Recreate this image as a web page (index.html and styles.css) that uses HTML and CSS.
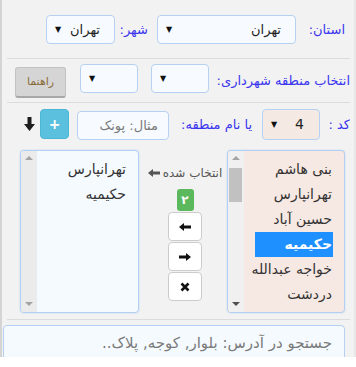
FILE: index.html
```html
<!DOCTYPE html>
<html lang="fa" dir="rtl">
<head>
    <meta charset="UTF-8">
    <title>انتخاب منطقه</title>
    <link rel="stylesheet" href="styles.css">
</head>
<body>

<div class="panel">
    <div class="row row-city">
        <label class="lbl lbl-ostan">استان:</label>
        <div class="sel sel-ostan"><span>تهران</span><span class="caret">▼</span></div>
        <label class="lbl lbl-shahr">شهر:</label>
        <div class="sel sel-shahr"><span>تهران</span><span class="caret">▼</span></div>
    </div>
    <div class="sep"></div>

    <div class="row row-zone">
        <label class="lbl lbl-zone">انتخاب منطقه شهرداری:</label>
        <div class="sel sel-small"><span></span><span class="caret">▼</span></div>
        <div class="sel sel-small sel-second"><span></span><span class="caret">▼</span></div>
        <button class="help-btn">راهنما</button>
    </div>
    <div class="sep"></div>

    <div class="row row-code">
        <label class="lbl lbl-code">کد :</label>
        <div class="sel sel-code"><span>4</span><span class="caret">▼</span></div>
        <label class="lbl lbl-name">یا نام منطقه:</label>
        <input class="name-input" type="text" placeholder="مثال: پونک">
        <button class="add-btn">+</button>
        <span class="down-icon">
            <svg width="11" height="14" viewBox="0 0 11 14"><path d="M3.5 0h4v7h3.5L5.5 14 0 7h3.5z" fill="#1e1e1e"/></svg>
        </span>
    </div>

    <div class="lists">
        <div class="listbox list-all">
            <div class="scroll">
                <span class="tri up"></span>
                <span class="thumb"></span>
                <span class="tri down dark"></span>
            </div>
            <div class="options">
                <div class="opt">بنی هاشم</div>
                <div class="opt">تهرانپارس</div>
                <div class="opt">حسین آباد</div>
                <div class="opt picked">حکیمیه</div>
                <div class="opt">خواجه عبدالله</div>
                <div class="opt">دردشت</div>
                <div class="opt">سراج</div>
            </div>
        </div>

        <div class="middle">
            <div class="chosen-label">
                <span>انتخاب شده</span>
                <svg width="12" height="8" viewBox="0 0 12 8"><path d="M0 4L5 0v2.5h7v3H5V8z" fill="#555"/></svg>
            </div>
            <span class="badge">۲</span>
            <button class="move-btn">
                <svg width="12" height="8" viewBox="0 0 12 8"><path d="M0 4L5 0v2.5h7v3H5V8z" fill="#111"/></svg>
            </button>
            <button class="move-btn">
                <svg width="12" height="8" viewBox="0 0 12 8"><path d="M12 4L7 0v2.5H0v3h7V8z" fill="#111"/></svg>
            </button>
            <button class="move-btn">
                <svg width="10" height="10" viewBox="0 0 10 10"><path d="M1.5 1.5l7 7M8.5 1.5l-7 7" stroke="#111" stroke-width="2.6"/></svg>
            </button>
        </div>

        <div class="listbox list-chosen">
            <div class="scroll">
                <span class="tri up"></span>
                <span class="tri down"></span>
            </div>
            <div class="options">
                <div class="opt">تهرانپارس</div>
                <div class="opt">حکیمیه</div>
            </div>
        </div>
    </div>
    <div class="sep sep-low"></div>

    <input class="search-input" type="text" placeholder="جستجو در آدرس: بلوار, کوجه, پلاک..">
</div>

</body>
</html>
```

FILE: styles.css
```css
body {
    margin: 0;
    background-color: #fff;
    font-family: "DejaVu Sans", sans-serif;
}
.panel {
    direction: rtl;
    height: 357px;
    width: 352px;
    background-color: #f2f2f2;
    border-left: 2px solid #d4d4d4;
    border-right: 2px solid #e8e8e8;
    overflow: hidden;
}
.row {
    display: flex;
    align-items: center;
}
.row-city {
    height: 58px;
    padding-right: 9px;
}
.row-zone {
    height: 43px;
    padding-right: 4px;
}
.row-code {
    height: 42px;
    padding-right: 4px;
}
.sep {
    height: 1px;
    background-color: #dcdcdc;
    margin: 0 4px 0 5px;
}
.lbl {
    color: #3a35ee;
    font-size: 13px;
    white-space: nowrap;
    box-sizing: border-box;
    overflow: hidden;
}
.lbl-ostan {
    width: 49px;
}
.lbl-shahr {
    width: 42px;
    padding-right: 9px;
}
.lbl-zone {
    width: 141px;
}
.lbl-code {
    width: 30px;
}
.lbl-name {
    width: 93px;
    padding-right: 10px;
}
.sel {
    box-sizing: border-box;
    height: 29px;
    display: flex;
    justify-content: space-between;
    align-items: center;
    padding: 0 14px 0 8px;
    background-color: #f7fbff;
    border: 1px solid #b6d0f2;
    border-radius: 4px;
    font-size: 13px;
    color: #222;
}
.caret {
    font-size: 8px;
    color: #111;
}
.sel-ostan {
    width: 139px;
}
.sel-shahr {
    width: 69px;
}
.sel-small {
    width: 58px;
    margin-bottom: 4px;
}
.sel-second {
    margin-right: 13px;
}
.sel-code {
    width: 58px;
    height: 31px;
    padding-right: 15px;
    background-color: #f5e9e3;
    font-size: 14px;
}
.help-btn {
    box-sizing: border-box;
    width: 51px;
    height: 31px;
    margin-right: 14px;
    margin-top: 3px;
    background-color: #d5d5d5;
    border: 1px solid #c2c2c2;
    border-bottom: 2px solid #a8a8a8;
    border-radius: 3px;
    color: #8a6d3b;
    font-family: "DejaVu Sans", sans-serif;
    font-size: 11px;
    padding: 0;
}
.name-input {
    box-sizing: border-box;
    width: 92px;
    height: 29px;
    margin-top: 2px;
    padding: 0 10px;
    background-color: #f7fbff;
    border: 1px solid #b6d0f2;
    border-radius: 4px;
    font-family: "DejaVu Sans", sans-serif;
    font-size: 13px;
}
.name-input::placeholder, .search-input::placeholder {
    color: #7a7a7a;
}
.add-btn {
    box-sizing: border-box;
    width: 29px;
    height: 30px;
    margin-right: 8px;
    padding: 0;
    background-color: #5bc0de;
    border: 1px solid #4cb6d6;
    border-radius: 4px;
    color: #fff;
    font-family: "DejaVu Sans", sans-serif;
    font-size: 14px;
    font-weight: bold;
}
.down-icon {
    display: flex;
    margin-right: 5px;
}
.lists {
    display: flex;
    margin-top: 5px;
    padding-right: 9px;
}
.listbox {
    box-sizing: border-box;
    height: 163px;
    display: flex;
    border: 1px solid #b3d0f4;
    border-radius: 4px;
    overflow: hidden;
    box-shadow: 0 0 2px rgba(102, 160, 230, 0.35);
}
.list-all {
    width: 118px;
    background-color: #f6e8e2;
}
.list-chosen {
    width: 119px;
    background-color: #f5faff;
}
.options {
    flex: 1;
    min-width: 0;
    padding: 6px 11px 0 11px;
    font-size: 14px;
    color: #333;
}
.opt {
    height: 25px;
    line-height: 25px;
    white-space: nowrap;
    padding: 0 1px;
}
.opt.picked {
    background-color: #1e90ff;
    color: #fff;
    font-weight: bold;
}
.scroll {
    order: 2;
    width: 16px;
    flex-shrink: 0;
    position: relative;
    background-color: #f0f0f0;
}
.list-chosen .scroll {
    background-color: #ebebeb;
}
.thumb {
    position: absolute;
    top: 17px;
    left: 1px;
    width: 13px;
    height: 34px;
    background-color: #c1c1c1;
}
.tri {
    position: absolute;
    left: 4px;
    width: 0;
    height: 0;
    border-left: 4px solid transparent;
    border-right: 4px solid transparent;
}
.tri.up {
    top: 5px;
    border-bottom: 4px solid #a3a3a3;
}
.tri.down {
    bottom: 6px;
    border-top: 4px solid #a3a3a3;
}
.tri.down.dark {
    border-top-color: #505050;
}
.middle {
    width: 84px;
    padding-left: 4px;
    display: flex;
    flex-direction: column;
    align-items: center;
    padding-top: 15px;
}
.chosen-label {
    display: flex;
    align-items: center;
    gap: 3px;
    height: 16px;
    font-size: 12px;
    color: #555;
    white-space: nowrap;
}
.badge {
    margin-top: 8px;
    width: 17px;
    height: 22px;
    line-height: 22px;
    text-align: center;
    background-color: #5cb85c;
    color: #fff;
    border-radius: 3px;
    font-size: 12px;
    font-weight: bold;
}
.move-btn {
    box-sizing: border-box;
    width: 34px;
    height: 29px;
    margin-top: 1px;
    padding: 0;
    display: flex;
    align-items: center;
    justify-content: center;
    background-color: #fff;
    border: 1px solid #ccc;
    border-radius: 4px;
}
.sep-low {
    margin-top: 6px;
}
.search-input {
    display: block;
    box-sizing: border-box;
    width: 342px;
    height: 36px;
    margin: 5px 9px 0 0;
    padding: 0 12px;
    background-color: #f5faff;
    border: 1px solid #b6d0f2;
    border-radius: 4px;
    font-family: "DejaVu Sans", sans-serif;
    font-size: 15px;
}
```
